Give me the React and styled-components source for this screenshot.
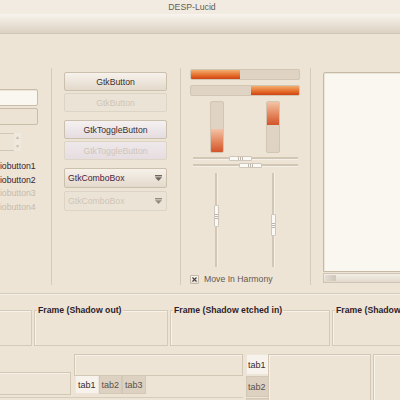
import React from 'react';
import styled, {createGlobalStyle} from 'styled-components';

const GlobalStyle = createGlobalStyle`
  html, body {
    margin: 0;
    padding: 0;
  }
  body {
    background: #ede4d5;
    font-family: "Liberation Sans", "DejaVu Sans", sans-serif;
  }
`;

const Window = styled.div`
  width: 400px;
  height: 400px;
  overflow: hidden;
  background: #ede4d5;
  display: flex;
  flex-direction: column;
  font-size: 8.7px;
  color: #4a3f38;
`;

const TitleBar = styled.div`
  flex: none;
  height: 14px;
  line-height: 15px;
  padding-right: 16px;
  text-align: center;
  background: #f1ebe1;
  color: #655d55;
`;

const Toolbar = styled.div`
  flex: none;
  height: 19px;
  background: linear-gradient(#f8f4ee, #ebe4d8 45%, #dcd2c3);
  border-bottom: 1px solid #d0c5b4;
`;

const Main = styled.div`
  flex: none;
  height: 259px;
  display: flex;
  align-items: flex-start;
`;

const Column = styled.div`
  flex: ${({$w}) => ($w ? 'none' : '1')};
  width: ${({$w}) => ($w ? `${$w}px` : 'auto')};
  height: 217px;
  margin-top: 34px;
  box-sizing: border-box;
  padding-left: ${({$pl}) => $pl || 0}px;
  border-right: ${({$sep}) => ($sep ? '1px solid #d6cbba' : 'none')};
  display: flex;
  flex-direction: column;
  min-width: 0;
`;

/* left column */
const Entry = styled.div`
  flex: none;
  width: 78px;
  height: 17px;
  margin-left: -40px;
  margin-top: ${({$mt}) => $mt}px;
  box-sizing: border-box;
  border: 1px solid #c9bda9;
  border-radius: 2px;
  background: ${({$active}) => ($active ? '#faf7f1' : '#ece3d4')};
  box-shadow: ${({$active}) => ($active ? 'inset 0 1px 0 #ebe4d8' : 'none')};
`;

const Spin = styled.div`
  flex: none;
  display: flex;
  margin-top: 8px;
  margin-left: -40px;
  height: 18px;
`;

const SpinField = styled.div`
  width: 54px;
  box-sizing: border-box;
  border: 1px solid #d3c8b6;
  border-right: none;
`;

const SpinArrows = styled.div`
  width: 7px;
  display: flex;
  flex-direction: column;
  align-items: center;
  justify-content: space-around;
  background: #efe8dc;
  color: #c8bdad;
  font-size: 5px;
  line-height: 5px;
`;

const RadioList = styled.div`
  margin-top: 9px;
  display: flex;
  flex-direction: column;
`;

const RadioLabel = styled.div`
  height: 13.7px;
  line-height: 13.7px;
  margin-left: -16px;
  white-space: nowrap;
  color: ${({$disabled}) => ($disabled ? '#c6bbac' : '#3a2234')};
`;

/* middle column */
const Button = styled.div`
  flex: none;
  width: 103px;
  height: 19px;
  margin-top: ${({$mt}) => $mt}px;
  box-sizing: border-box;
  border: 1px solid ${({$disabled}) => ($disabled ? '#ddd4c6' : '#cbbfae')};
  border-radius: 2px;
  background: ${({$disabled, $toggle}) =>
    $disabled
      ? $toggle
        ? 'linear-gradient(#efe8ea, #e6dde0)'
        : '#ebe3d6'
      : $toggle
      ? 'linear-gradient(#f6f1f1, #e5dce0)'
      : 'linear-gradient(#f7f2ec, #e3d9cb)'};
  color: ${({$disabled}) => ($disabled ? '#cfc5b8' : '#3a302c')};
  display: flex;
  align-items: center;
  justify-content: center;
`;

const Combo = styled(Button)`
  height: 20px;
  justify-content: space-between;
  padding: 0 4px 0 3px;
  color: ${({$disabled}) => ($disabled ? '#cfc5b8' : '#4a2243')};
  background: ${({$disabled}) =>
    $disabled ? '#ebe3d6' : 'linear-gradient(#f6f1ea, #e4dacc)'};
`;

const ComboArrow = ({faded}) => (
  <svg width="7" height="6" viewBox="0 0 7 6">
    <rect x="0" y="0" width="7" height="1.4" fill={faded ? '#948b82' : '#6f6660'} />
    <path d="M0 2.3 H7 L3.5 6 Z" fill={faded ? '#948b82' : '#6f6660'} />
  </svg>
);

/* range column */
const Trough = styled.div`
  flex: none;
  width: 110px;
  height: 11px;
  margin-top: ${({$mt}) => $mt}px;
  box-sizing: border-box;
  border: 1px solid #d1c5b3;
  border-radius: 2px;
  background: #dfd4c3;
  display: flex;
  justify-content: ${({$rev}) => ($rev ? 'flex-end' : 'flex-start')};
  overflow: hidden;
`;

const Fill = styled.div`
  height: 100%;
  width: ${({$w}) => $w}px;
  background: linear-gradient(#f3ac70, #e6722f 55%, #cf4212);
`;

const VBarRow = styled.div`
  flex: none;
  display: flex;
  gap: 42px;
  padding-left: 20px;
  margin-top: 5px;
  height: 52px;
`;

const VTrough = styled.div`
  width: 14px;
  height: 52px;
  box-sizing: border-box;
  border: 1px solid #d1c5b3;
  border-radius: 2px;
  background: #dfd4c3;
  display: flex;
  flex-direction: column;
  justify-content: ${({$top}) => ($top ? 'flex-start' : 'flex-end')};
  overflow: hidden;
`;

const VFill = styled.div`
  height: ${({$h}) => $h}px;
  background: linear-gradient(#f4c3a6, #e58a62 50%, #d4542a);
`;

const HScale = styled.div`
  flex: none;
  position: relative;
  margin-left: 3px;
  margin-top: ${({$mt}) => $mt}px;
  width: 105px;
  height: 7px;
  display: flex;
  align-items: center;
`;

const ScaleLine = styled.div`
  width: 100%;
  height: 2px;
  background: #d2c7b5;
  border-bottom: 1px solid #f4efe7;
`;

const HSlider = styled.div`
  position: absolute;
  top: 1px;
  left: ${({$x}) => $x}px;
  width: 23px;
  height: 5px;
  box-sizing: border-box;
  border: 1px solid #cfc6bb;
  border-radius: 1px;
  background: repeating-linear-gradient(90deg, #fbf9f6 0 1px, #bdb4aa 1px 2px) center / 7px 100% no-repeat,
    #fbf9f6;
`;

const VScaleRow = styled.div`
  flex: none;
  display: flex;
  gap: 52px;
  padding-left: 24px;
  margin-top: 4px;
  height: 94px;
`;

const VScale = styled.div`
  position: relative;
  width: 5px;
  height: 94px;
  display: flex;
  justify-content: center;
`;

const VScaleLine = styled.div`
  width: 2px;
  height: 100%;
  background: #d2c7b5;
  border-right: 1px solid #f4efe7;
`;

const VSlider = styled.div`
  position: absolute;
  left: 0;
  top: ${({$y}) => $y}px;
  width: 5px;
  height: 22px;
  box-sizing: border-box;
  border: 1px solid #cfc6bb;
  border-radius: 1px;
  background: repeating-linear-gradient(#fbf9f6 0 1px, #bdb4aa 1px 2px) center / 100% 7px no-repeat,
    #fbf9f6;
`;

const CheckRow = styled.div`
  flex: none;
  display: flex;
  align-items: center;
  gap: 5px;
  margin-top: 7px;
  color: #64584f;
`;

const CheckBox = styled.div`
  width: 9px;
  height: 9px;
  box-sizing: border-box;
  border: 1px solid #c4b9a9;
  border-radius: 1px;
  background: linear-gradient(#fbf8f3, #e6dfd4);
  display: flex;
  align-items: center;
  justify-content: center;
`;

/* right column */
const TextView = styled.div`
  flex: none;
  margin-top: 4px;
  width: 95px;
  height: 200px;
  box-sizing: border-box;
  border: 1px solid #c6baa7;
  border-radius: 2px 0 0 0;
  background: #faf7f1;
  box-shadow: inset 1px 1px 0 #ece5da;
`;

const HScrollbar = styled.div`
  flex: none;
  margin-top: 1px;
  width: 95px;
  height: 10px;
  box-sizing: border-box;
  border: 1px solid #d0c5b4;
  background: linear-gradient(#f3eee6, #e2d9cc);
  padding: 1px;
  display: flex;
`;

const ScrollThumb = styled.div`
  width: 11px;
  height: 100%;
  border-radius: 1px;
  background: linear-gradient(90deg, #e3dcd2, #cfc6ba);
`;

/* bottom */
const Bottom = styled.div`
  flex: 1;
  border-top: 1px solid #d6ccbb;
  box-shadow: inset 0 1px 0 #f5f0e8;
  display: flex;
  flex-direction: column;
`;

const FrameRow = styled.div`
  display: flex;
  gap: 2px;
  margin-top: 16px;
  height: 36px;
`;

const Frame = styled.div`
  flex: none;
  width: ${({$w}) => $w}px;
  margin-left: ${({$ml}) => $ml || 0}px;
  box-sizing: border-box;
  border: 1px solid #d5cab8;
  box-shadow: inset 1px 1px 0 #f6f1e9;
  padding-left: 2px;
`;

const FrameLabel = styled.div`
  width: fit-content;
  margin-top: -6px;
  padding: 0 1px;
  background: #ede4d5;
  font-weight: bold;
  color: #2f1c2a;
  line-height: 10px;
  white-space: nowrap;
`;

const NoteRow = styled.div`
  display: flex;
  gap: 3px;
  margin-top: 8px;
  height: 46px;
`;

const LeftGroup = styled.div`
  flex: none;
  display: flex;
  gap: 3px;
  height: 43px;
  border-bottom: 1px solid #d6ccbb;
`;

const Box = styled.div`
  flex: none;
  width: ${({$w}) => $w}px;
  height: ${({$h}) => ($h ? `${$h}px` : 'auto')};
  margin-left: ${({$ml}) => $ml || 0}px;
  margin-top: ${({$mt}) => $mt || 0}px;
  box-sizing: border-box;
  border: 1px solid #d2c6b4;
  box-shadow: inset 1px 1px 0 #f6f1e9;
`;

const Notebook = styled.div`
  flex: none;
  width: ${({$w}) => $w}px;
  display: flex;
  flex-direction: ${({$side}) => ($side ? 'row' : 'column')};
  align-items: flex-start;
`;

const TabStrip = styled.div`
  flex: none;
  display: flex;
  flex-direction: ${({$side}) => ($side ? 'column' : 'row')};
  padding-left: ${({$side}) => ($side ? 0 : 1)}px;
`;

const Tab = styled.div`
  flex: none;
  box-sizing: border-box;
  width: ${({$side}) => ($side ? '22px' : 'auto')};
  height: ${({$side}) => ($side ? '21px' : '18px')};
  padding: ${({$side}) => ($side ? '0 0 0 1px' : '0 2px')};
  margin-bottom: ${({$side}) => ($side ? 1 : 0)}px;
  display: flex;
  align-items: center;
  font-size: 9px;
  border: 1px solid ${({$active}) => ($active ? '#ece5da' : '#d3c7b5')};
  ${({$side}) => ($side ? 'border-right: none;' : 'border-top: none;')}
  background: ${({$active}) => ($active ? '#f7f3ec' : '#ddd2c1')};
  color: ${({$active}) => ($active ? '#352a31' : '#5b504a')};
`;

const App = () => (
  <>
    <GlobalStyle />
    <Window>
      <TitleBar>DESP-Lucid</TitleBar>
      <Toolbar />
      <Main>
        <Column $w={52} $sep>
          <Entry $mt={21} $active />
          <Entry $mt={2} />
          <Spin>
            <SpinField />
            <SpinArrows>
              <span>▲</span>
              <span>▼</span>
            </SpinArrows>
          </Spin>
          <RadioList>
            <RadioLabel>Radiobutton1</RadioLabel>
            <RadioLabel>Radiobutton2</RadioLabel>
            <RadioLabel $disabled>Radiobutton3</RadioLabel>
            <RadioLabel $disabled>Radiobutton4</RadioLabel>
          </RadioList>
        </Column>

        <Column $w={129} $pl={12} $sep>
          <Button $mt={4}>GtkButton</Button>
          <Button $mt={2} $disabled>GtkButton</Button>
          <Button $mt={8} $toggle>GtkToggleButton</Button>
          <Button $mt={2} $toggle $disabled>GtkToggleButton</Button>
          <Combo $mt={8}>
            GtkComboBox
            <ComboArrow />
          </Combo>
          <Combo $mt={3} $disabled>
            GtkComboBox
            <ComboArrow faded />
          </Combo>
        </Column>

        <Column $w={130} $pl={9} $sep>
          <Trough $mt={1}>
            <Fill $w={49} />
          </Trough>
          <Trough $mt={5} $rev>
            <Fill $w={48} />
          </Trough>
          <VBarRow>
            <VTrough>
              <VFill $h={23} />
            </VTrough>
            <VTrough $top>
              <VFill $h={23} />
            </VTrough>
          </VBarRow>
          <HScale $mt={2}>
            <ScaleLine />
            <HSlider $x={36} />
          </HScale>
          <HScale $mt={0}>
            <ScaleLine />
            <HSlider $x={46} />
          </HScale>
          <VScaleRow>
            <VScale>
              <VScaleLine />
              <VSlider $y={32} />
            </VScale>
            <VScale>
              <VScaleLine />
              <VSlider $y={41} />
            </VScale>
          </VScaleRow>
          <CheckRow>
            <CheckBox>
              <svg width="5" height="5" viewBox="0 0 5 5">
                <path d="M0.5 0.5 L4.5 4.5 M4.5 0.5 L0.5 4.5" stroke="#4a4240" strokeWidth="1.2" />
              </svg>
            </CheckBox>
            Move In Harmony
          </CheckRow>
        </Column>

        <Column $pl={12}>
          <TextView />
          <HScrollbar>
            <ScrollThumb />
          </HScrollbar>
        </Column>
      </Main>

      <Bottom>
        <FrameRow>
          <Frame $w={60} $ml={-28} />
          <Frame $w={134}>
            <FrameLabel>Frame (Shadow out)</FrameLabel>
          </Frame>
          <Frame $w={160}>
            <FrameLabel>Frame (Shadow etched in)</FrameLabel>
          </Frame>
          <Frame $w={120}>
            <FrameLabel>Frame (Shadow etched out)</FrameLabel>
          </Frame>
        </FrameRow>
        <NoteRow>
          <LeftGroup>
            <Box $w={99} $ml={-28} $mt={18} $h={23} />
            <Notebook $w={169}>
              <Box $w={169} $h={22} />
              <TabStrip>
                <Tab $active>tab1</Tab>
                <Tab>tab2</Tab>
                <Tab>tab3</Tab>
              </TabStrip>
            </Notebook>
          </LeftGroup>
          <Notebook $w={124} $side>
            <TabStrip $side>
              <Tab $side $active>tab1</Tab>
              <Tab $side>tab2</Tab>
              <Tab $side>tab3</Tab>
            </TabStrip>
            <Box $w={103} $h={60} />
          </Notebook>
          <Box $w={60} $h={60} />
        </NoteRow>
      </Bottom>
    </Window>
  </>
);

export default App;
